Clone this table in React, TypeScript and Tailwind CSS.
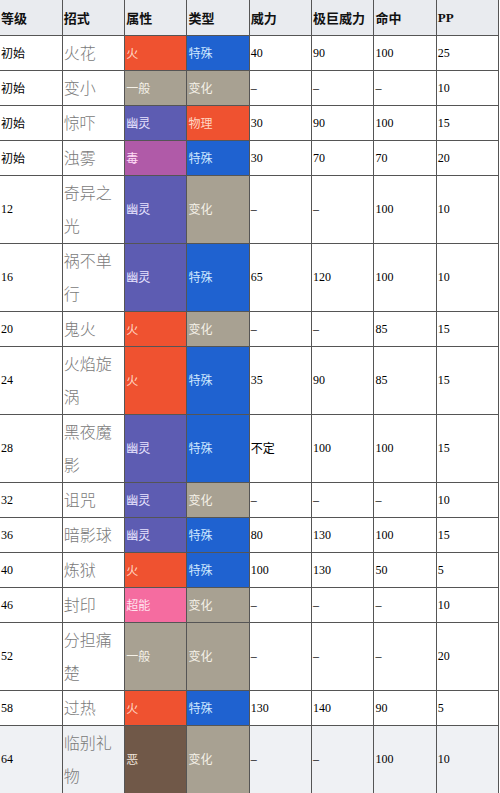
import React from "react";

type Move = {
  lv: string;
  name: string;
  type: string;
  cat: string;
  power: string;
  max: string;
  acc: string;
  pp: string;
};

const moves: Move[] = [
  { lv: "初始", name: "火花", type: "火", cat: "特殊", power: "40", max: "90", acc: "100", pp: "25" },
  { lv: "初始", name: "变小", type: "一般", cat: "变化", power: "–", max: "–", acc: "–", pp: "10" },
  { lv: "初始", name: "惊吓", type: "幽灵", cat: "物理", power: "30", max: "90", acc: "100", pp: "15" },
  { lv: "初始", name: "浊雾", type: "毒", cat: "特殊", power: "30", max: "70", acc: "70", pp: "20" },
  { lv: "12", name: "奇异之光", type: "幽灵", cat: "变化", power: "–", max: "–", acc: "100", pp: "10" },
  { lv: "16", name: "祸不单行", type: "幽灵", cat: "特殊", power: "65", max: "120", acc: "100", pp: "10" },
  { lv: "20", name: "鬼火", type: "火", cat: "变化", power: "–", max: "–", acc: "85", pp: "15" },
  { lv: "24", name: "火焰旋涡", type: "火", cat: "特殊", power: "35", max: "90", acc: "85", pp: "15" },
  { lv: "28", name: "黑夜魔影", type: "幽灵", cat: "特殊", power: "不定", max: "100", acc: "100", pp: "15" },
  { lv: "32", name: "诅咒", type: "幽灵", cat: "变化", power: "–", max: "–", acc: "–", pp: "10" },
  { lv: "36", name: "暗影球", type: "幽灵", cat: "特殊", power: "80", max: "130", acc: "100", pp: "15" },
  { lv: "40", name: "炼狱", type: "火", cat: "特殊", power: "100", max: "130", acc: "50", pp: "5" },
  { lv: "46", name: "封印", type: "超能", cat: "变化", power: "–", max: "–", acc: "–", pp: "10" },
  { lv: "52", name: "分担痛楚", type: "一般", cat: "变化", power: "–", max: "–", acc: "–", pp: "20" },
  { lv: "58", name: "过热", type: "火", cat: "特殊", power: "130", max: "140", acc: "90", pp: "5" },
  { lv: "64", name: "临别礼物", type: "恶", cat: "变化", power: "–", max: "–", acc: "100", pp: "10" },
];

const typeColor: Record<string, string> = {
  火: "bg-[#ef5230] text-[#ffd6c4]",
  一般: "bg-[#a8a192] text-[#f5f1e8]",
  幽灵: "bg-[#5d5cb2] text-[#e8e4ff]",
  毒: "bg-[#b05aa8] text-[#ffdaf6]",
  超能: "bg-[#f56ca0] text-[#ffe3ee]",
  恶: "bg-[#705848] text-[#f0e6dc]",
};

const catColor: Record<string, string> = {
  特殊: "bg-[#1f62d0] text-[#cfe8ff]",
  变化: "bg-[#a8a192] text-[#f5f1e8]",
  物理: "bg-[#ef5230] text-[#ffd6c4]",
};

const headers = ["等级", "招式", "属性", "类型", "威力", "极巨威力", "命中", "PP"];

const cjk = "font-['Noto_Sans_CJK_SC',sans-serif]";
const num = "font-['Liberation_Serif','Noto_Sans_CJK_SC',serif]";

export default function App() {
  return (
    <div className="w-[500px] h-[793px] overflow-hidden bg-white">
      <table className="w-[499px] table-fixed border-collapse">
        <thead>
          <tr className="h-[35px] bg-[#e9ebef]">
            {headers.map((h, i) => (
              <th
                key={h}
                className={`border-b border-r border-[#555] px-px text-left text-[13px] font-semibold text-[#111] ${
                  i === 7 ? num : cjk
                }`}
              >
                {h}
              </th>
            ))}
          </tr>
        </thead>
        <tbody>
          {moves.map((m, i) => {
            const last = i === moves.length - 1;
            const base = `border-b border-r border-[#555] px-px align-middle ${
              last ? "bg-[#eff1f4]" : "bg-white"
            }`;
            return (
              <tr key={i} className="h-[35px]">
                <td className={`${base} text-[12px] text-black ${m.lv === "初始" ? cjk : num}`}>{m.lv}</td>
                <td className={`${base} text-[16px] font-light leading-[33.5px] text-[#7a7a7a] break-all ${cjk}`}>
                  {m.name}
                </td>
                <td className={`border-b border-r border-[#555] px-px text-[12px] ${cjk} ${typeColor[m.type]}`}>
                  {m.type}
                </td>
                <td className={`border-b border-r border-[#555] px-px text-[12px] ${cjk} ${catColor[m.cat]}`}>
                  {m.cat}
                </td>
                <td className={`${base} text-[12px] text-black ${m.power === "不定" ? cjk : num}`}>{m.power}</td>
                <td className={`${base} text-[12px] text-black ${num}`}>{m.max}</td>
                <td className={`${base} text-[12px] text-black ${num}`}>{m.acc}</td>
                <td className={`${base} text-[12px] text-black ${num}`}>{m.pp}</td>
              </tr>
            );
          })}
        </tbody>
      </table>
    </div>
  );
}
